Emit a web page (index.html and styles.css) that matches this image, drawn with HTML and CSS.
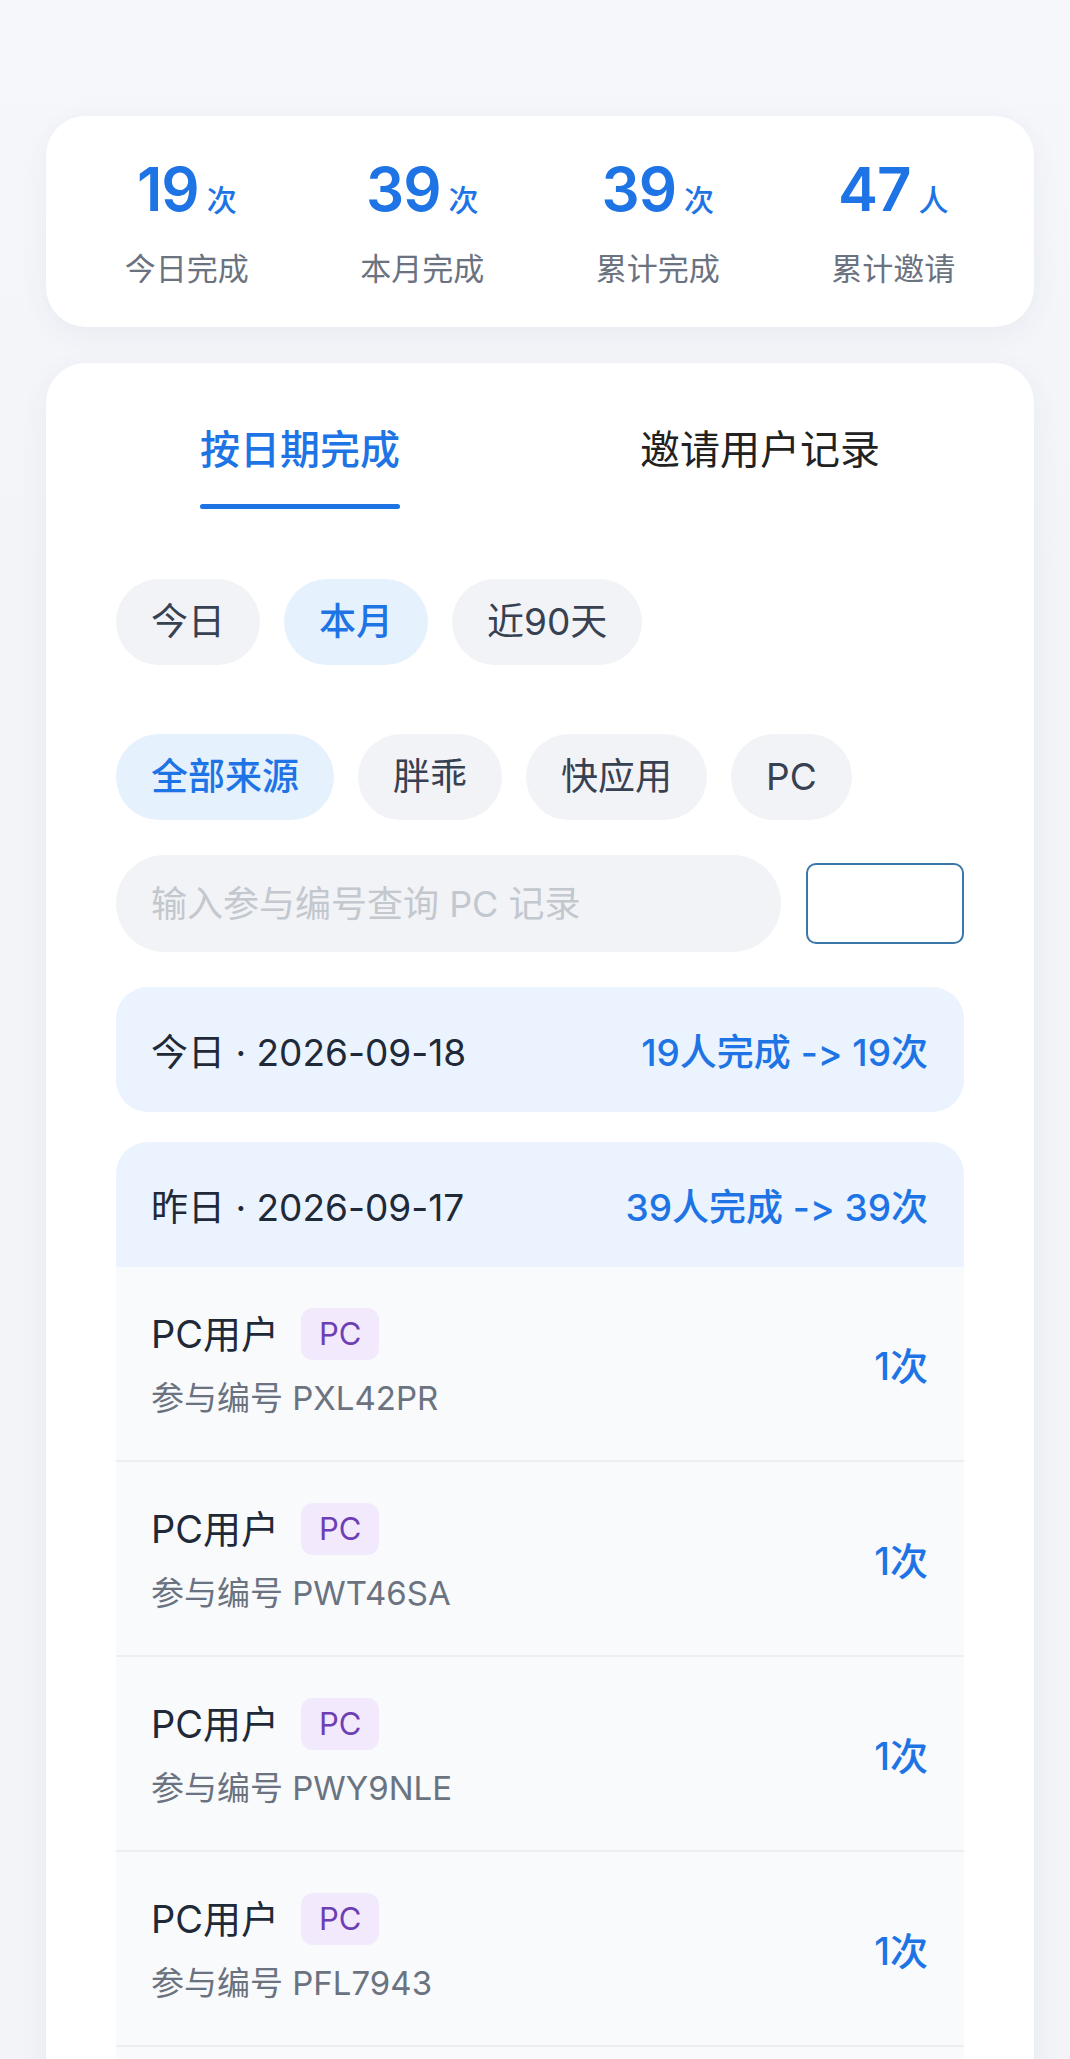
FILE: index.html
```html
<!DOCTYPE html>
<html lang="zh-CN">
<head>
    <meta charset="UTF-8">
    <meta name="viewport" content="width=device-width, initial-scale=1.0">
    <title>完成记录</title>
    <link rel="stylesheet" href="styles.css">
</head>
<body>

<div class="page">
    <div class="stats-card">
        <div class="stat">
            <div class="stat-num">19<span class="stat-unit">次</span></div>
            <div class="stat-label">今日完成</div>
        </div>
        <div class="stat">
            <div class="stat-num">39<span class="stat-unit">次</span></div>
            <div class="stat-label">本月完成</div>
        </div>
        <div class="stat">
            <div class="stat-num">39<span class="stat-unit">次</span></div>
            <div class="stat-label">累计完成</div>
        </div>
        <div class="stat">
            <div class="stat-num">47<span class="stat-unit">人</span></div>
            <div class="stat-label">累计邀请</div>
        </div>
    </div>

    <div class="main-card">
        <div class="tabs">
            <div class="tab active">按日期完成</div>
            <div class="tab">邀请用户记录</div>
        </div>

        <div class="chips chips-range">
            <span class="chip">今日</span>
            <span class="chip active">本月</span>
            <span class="chip">近90天</span>
        </div>

        <div class="chips chips-source">
            <span class="chip active">全部来源</span>
            <span class="chip">胖乖</span>
            <span class="chip">快应用</span>
            <span class="chip">PC</span>
        </div>

        <div class="search-row">
            <input type="text" class="search-input" placeholder="输入参与编号查询 PC 记录">
            <button class="search-btn"></button>
        </div>

        <div class="day-box">
            <span class="day-date">今日 · 2026-09-18</span>
            <span class="day-sum">19人完成 -&gt; 19次</span>
        </div>

        <div class="day-group">
            <div class="day-box day-head">
                <span class="day-date">昨日 · 2026-09-17</span>
                <span class="day-sum">39人完成 -&gt; 39次</span>
            </div>
            <div class="record">
                <div class="record-info">
                    <div class="record-title">PC用户 <span class="tag">PC</span></div>
                    <div class="record-sub">参与编号 PXL42PR</div>
                </div>
                <div class="record-count">1次</div>
            </div>
            <div class="record">
                <div class="record-info">
                    <div class="record-title">PC用户 <span class="tag">PC</span></div>
                    <div class="record-sub">参与编号 PWT46SA</div>
                </div>
                <div class="record-count">1次</div>
            </div>
            <div class="record">
                <div class="record-info">
                    <div class="record-title">PC用户 <span class="tag">PC</span></div>
                    <div class="record-sub">参与编号 PWY9NLE</div>
                </div>
                <div class="record-count">1次</div>
            </div>
            <div class="record">
                <div class="record-info">
                    <div class="record-title">PC用户 <span class="tag">PC</span></div>
                    <div class="record-sub">参与编号 PFL7943</div>
                </div>
                <div class="record-count">1次</div>
            </div>
            <div class="record record-more"></div>
        </div>
    </div>
</div>

</body>
</html>
```

FILE: styles.css
```css
body {
    margin: 0;
    background: linear-gradient(#f6f7fb, #f2f4f8 600px);
    font-family: Inter, "Noto Sans CJK SC", sans-serif;
    font-feature-settings: "calt" 0;
    color: #1f2937;
}
.page {
    padding: 116px 36px 0 46px;
}
.stats-card {
    background: #fff;
    border-radius: 40px;
    box-shadow: 0 8px 30px rgba(40, 60, 110, 0.06);
    padding: 36px 23px 38px;
    display: grid;
    grid-template-columns: repeat(4, 1fr);
}
.stat {
    text-align: center;
}
.stat-num {
    font-size: 60px;
    line-height: 74px;
    font-weight: 600;
    color: #1e74e5;
    letter-spacing: -1px;
}
.stat-unit {
    font-size: 30px;
    font-weight: 500;
    margin-left: 8px;
    letter-spacing: 0;
}
.stat-label {
    margin-top: 12px;
    font-size: 31px;
    line-height: 40px;
    color: #6b7280;
}
.main-card {
    margin-top: 36px;
    background: #fff;
    border-radius: 40px 40px 0 0;
    box-shadow: 0 8px 30px rgba(40, 60, 110, 0.06);
    padding: 59px 70px 0;
}
.tabs {
    display: flex;
    justify-content: space-around;
    margin: 0 -36px;
}
.tab {
    font-size: 40px;
    line-height: 56px;
    color: #222;
}
.tab.active {
    color: #1e74e5;
    font-weight: 500;
}
.tab.active::after {
    content: "";
    display: block;
    height: 5px;
    border-radius: 3px;
    background: #1e74e5;
    margin-top: 26px;
}
.chips {
    display: flex;
    gap: 24px;
}
.chips-range {
    margin-top: 70px;
}
.chips-source {
    margin-top: 69px;
}
.chip {
    height: 86px;
    line-height: 86px;
    padding: 0 35px;
    border-radius: 43px;
    background: #f1f3f6;
    color: #374151;
    font-size: 37px;
}
.chip.active {
    background: #e6f1fe;
    color: #1e74e5;
    font-weight: 500;
}
.search-row {
    display: flex;
    align-items: center;
    gap: 25px;
    margin-top: 35px;
}
.search-input {
    flex: 1;
    height: 97px;
    box-sizing: border-box;
    border: none;
    outline: none;
    border-radius: 49px;
    background: #f1f3f6;
    padding: 0 35px;
    font-family: inherit;
    font-size: 36px;
    color: #1f2937;
}
.search-input::placeholder {
    color: #c3c7ce;
}
.search-btn {
    width: 158px;
    height: 81px;
    box-sizing: border-box;
    border: 2px solid #3b76a9;
    border-radius: 10px;
    background: #fff;
}
.day-box {
    margin-top: 35px;
    height: 125px;
    box-sizing: border-box;
    padding: 0 36px 0 35px;
    display: flex;
    align-items: center;
    justify-content: space-between;
    background: #eaf3fe;
    border-radius: 32px;
    font-size: 37px;
}
.day-date {
    color: #1f2937;
}
.day-sum {
    color: #1e74e5;
    font-weight: 500;
}
.day-group {
    margin-top: 30px;
}
.day-group .day-head {
    margin-top: 0;
    border-radius: 32px 32px 0 0;
}
.record {
    height: 195px;
    box-sizing: border-box;
    padding: 0 36px 0 35px;
    background: #f8fafc;
    border-bottom: 2px solid #eceef2;
    display: flex;
    align-items: center;
    justify-content: space-between;
}
.record-title {
    display: flex;
    align-items: center;
    gap: 22px;
    font-size: 38px;
    line-height: 52px;
    color: #1f2937;
}
.tag {
    height: 52px;
    line-height: 52px;
    padding: 0 18px;
    border-radius: 12px;
    background: #f3e9fd;
    color: #6d3fb5;
    font-size: 31px;
}
.record-sub {
    margin-top: 16px;
    font-size: 33px;
    line-height: 44px;
    color: #6b7280;
}
.record-count {
    font-size: 38px;
    color: #1e74e5;
    font-weight: 500;
}
```
